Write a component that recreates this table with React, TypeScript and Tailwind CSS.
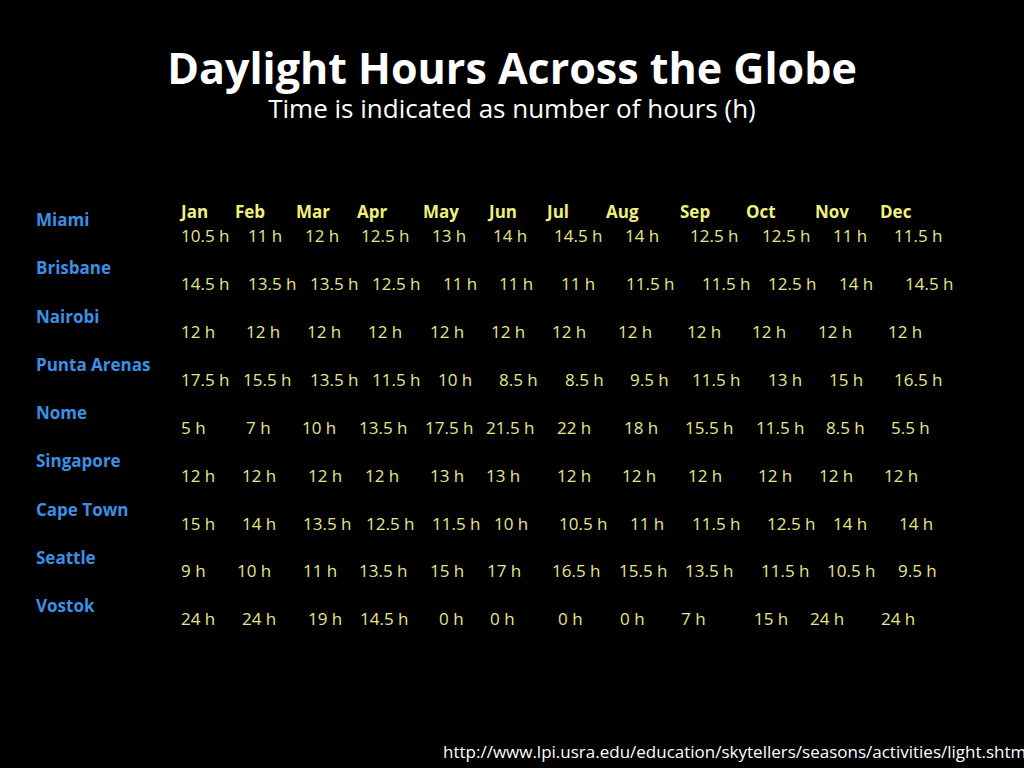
const months = ['Jan', 'Feb', 'Mar', 'Apr', 'May', 'Jun', 'Jul', 'Aug', 'Sep', 'Oct', 'Nov', 'Dec'];
const monthX = [181, 235, 296, 357, 423, 489, 547, 606, 680, 746, 815, 880];

const rows = [
  { city: 'Miami', values: ['10.5', '11', '12', '12.5', '13', '14', '14.5', '14', '12.5', '12.5', '11', '11.5'], x: [181, 248, 305, 361, 432, 493, 554, 625, 690, 762, 833, 894] },
  { city: 'Brisbane', values: ['14.5', '13.5', '13.5', '12.5', '11', '11', '11', '11.5', '11.5', '12.5', '14', '14.5'], x: [181, 248, 310, 372, 443, 499, 561, 626, 702, 768, 839, 905] },
  { city: 'Nairobi', values: ['12', '12', '12', '12', '12', '12', '12', '12', '12', '12', '12', '12'], x: [181, 246, 307, 368, 430, 491, 552, 618, 687, 752, 818, 888] },
  { city: 'Punta Arenas', values: ['17.5', '15.5', '13.5', '11.5', '10', '8.5', '8.5', '9.5', '11.5', '13', '15', '16.5'], x: [181, 243, 310, 372, 438, 499, 565, 630, 692, 768, 829, 894] },
  { city: 'Nome', values: ['5', '7', '10', '13.5', '17.5', '21.5', '22', '18', '15.5', '11.5', '8.5', '5.5'], x: [181, 246, 302, 359, 425, 486, 557, 624, 685, 756, 826, 891] },
  { city: 'Singapore', values: ['12', '12', '12', '12', '13', '13', '12', '12', '12', '12', '12', '12'], x: [181, 242, 308, 365, 430, 486, 557, 622, 688, 758, 819, 884] },
  { city: 'Cape Town', values: ['15', '14', '13.5', '12.5', '11.5', '10', '10.5', '11', '11.5', '12.5', '14', '14'], x: [181, 242, 303, 366, 432, 494, 559, 630, 692, 767, 833, 899] },
  { city: 'Seattle', values: ['9', '10', '11', '13.5', '15', '17', '16.5', '15.5', '13.5', '11.5', '10.5', '9.5'], x: [181, 237, 303, 359, 430, 487, 552, 619, 685, 761, 827, 898] },
  { city: 'Vostok', values: ['24', '24', '19', '14.5', '0', '0', '0', '0', '7', '15', '24', '24'], x: [181, 242, 308, 360, 439, 490, 558, 620, 681, 754, 810, 881] },
];

function PlacedRow({ items, x, className }: { items: string[]; x: number[]; className: string }) {
  return (
    <div className={`flex h-6 items-center whitespace-nowrap ${className}`}>
      {items.map((item, i) => (
        <span key={i} className="shrink-0" style={i < items.length - 1 ? { width: x[i + 1] - x[i] } : undefined}>
          {item}
        </span>
      ))}
    </div>
  );
}

export default function App() {
  return (
    <div className="relative h-[768px] w-[1024px] overflow-hidden bg-black font-['Open_Sans',sans-serif]">
      {/* Title */}
      <div className="flex flex-col items-center pt-[43px]">
        <h1 className="text-[43px] font-bold leading-[50px] text-white">Daylight Hours Across the Globe</h1>
        <p className="text-[26px] leading-[30px] text-white">Time is indicated as number of hours (h)</p>
      </div>

      {/* Table */}
      <div className="mt-[77px] flex">
        <div className="w-[181px] pl-[36px] pt-2">
          {rows.map((r) => (
            <div key={r.city} className="h-[48.25px] text-[17px] font-bold leading-6 text-[#3d8fe4]">
              {r.city}
            </div>
          ))}
        </div>
        <div>
          <PlacedRow items={months} x={monthX} className="text-[17px] font-bold text-[#f0f07c]" />
          {rows.map((r) => (
            <div key={r.city} className="h-[47.9px]">
              <PlacedRow items={r.values.map((v) => `${v} h`)} x={r.x} className="text-[17px] text-[#e6e68c]" />
            </div>
          ))}
        </div>
      </div>

      {/* Source */}
      <div className="absolute bottom-[4px] left-[443px] whitespace-nowrap text-[17px] leading-6 text-white">
        http://www.lpi.usra.edu/education/skytellers/seasons/activities/light.shtml
      </div>
    </div>
  );
}
